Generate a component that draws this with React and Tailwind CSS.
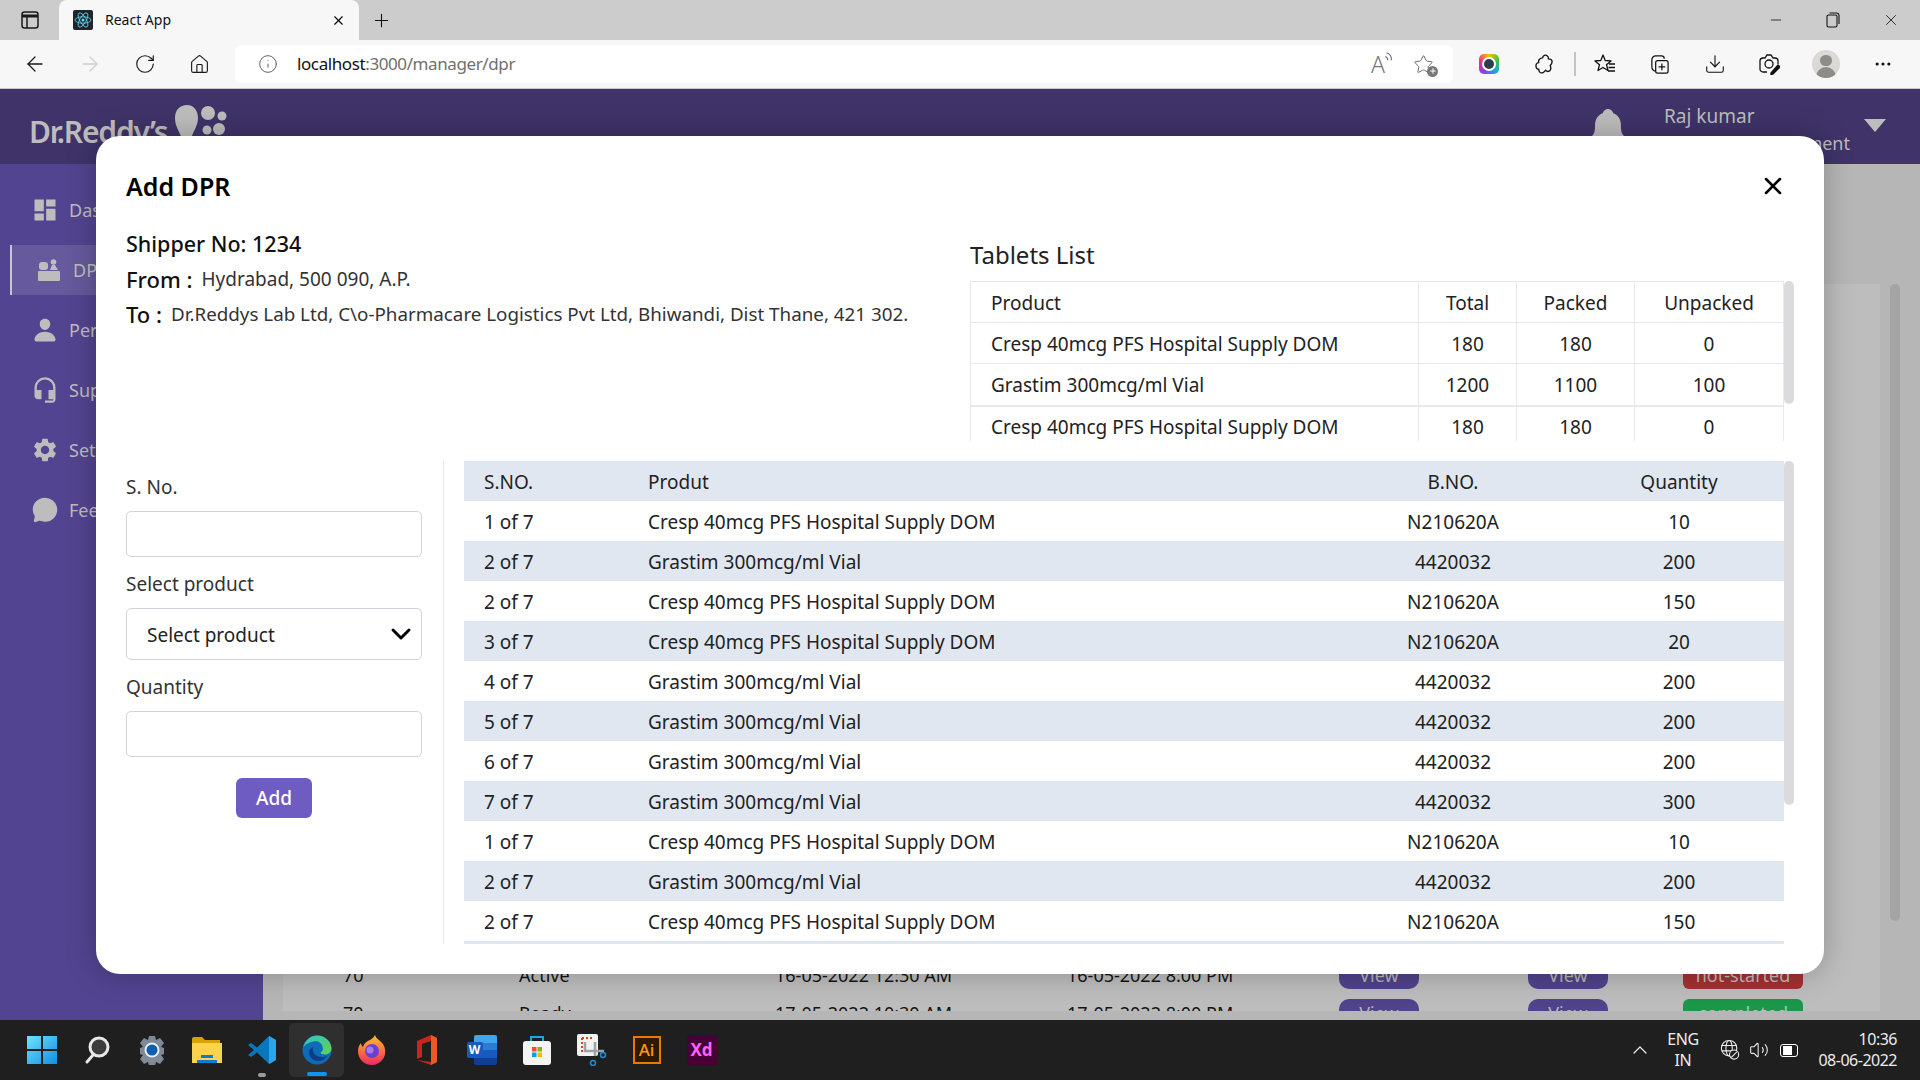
import {
  ArrowLeft, ArrowRight, RotateCw, Home, Info, Plus, X, Minus, Download, MoreHorizontal, ChevronUp, Volume2, Star, ChevronDown,
} from 'lucide-react';
import { MdDashboard, MdHeadsetMic, MdSettings } from 'react-icons/md';
import { IoPerson, IoChatbubble, IoNotifications } from 'react-icons/io5';

const font = 'font-["Noto_Sans",sans-serif]';

const tablets = [
  ['Cresp 40mcg PFS Hospital Supply DOM', 180, 180, 0],
  ['Grastim 300mcg/ml Vial', 1200, 1100, 100],
  ['Cresp 40mcg PFS Hospital Supply DOM', 180, 180, 0],
];

const cresp = 'Cresp 40mcg PFS Hospital Supply DOM';
const grastim = 'Grastim 300mcg/ml Vial';
const entries = [
  ['1 of 7', cresp, 'N210620A', 10],
  ['2 of 7', grastim, '4420032', 200],
  ['2 of 7', cresp, 'N210620A', 150],
  ['3 of 7', cresp, 'N210620A', 20],
  ['4 of 7', grastim, '4420032', 200],
  ['5 of 7', grastim, '4420032', 200],
  ['6 of 7', grastim, '4420032', 200],
  ['7 of 7', grastim, '4420032', 300],
  ['1 of 7', cresp, 'N210620A', 10],
  ['2 of 7', grastim, '4420032', 200],
  ['2 of 7', cresp, 'N210620A', 150],
  ['3 of 7', cresp, 'N210620A', 20],
];

function ReactLogo() {
  return (
    <svg viewBox="0 0 20 20" className="w-5 h-5 rounded-[2px] bg-[#20232a]" fill="none" stroke="#61dafb" strokeWidth="0.8">
      <circle cx="10" cy="10" r="1.5" fill="#61dafb" stroke="none" />
      <ellipse cx="10" cy="10" rx="8" ry="3.2" />
      <ellipse cx="10" cy="10" rx="8" ry="3.2" transform="rotate(60 10 10)" />
      <ellipse cx="10" cy="10" rx="8" ry="3.2" transform="rotate(120 10 10)" />
    </svg>
  );
}

function TabBar() {
  return (
    <div className="h-10 flex-none flex items-stretch bg-[#cccccc]">
      <div className="w-[59px] flex-none flex items-center pl-[21px]">
        <svg viewBox="0 0 18 18" className="w-[18px] h-[18px]" fill="none" stroke="#1a1a1a" strokeWidth="1.5">
          <rect x="1" y="1" width="16" height="16" rx="2.5" />
          <path d="M1 5h16" strokeWidth="3" />
          <path d="M6 5v12" />
        </svg>
      </div>
      <div className="w-[300px] flex-none flex items-center pl-[14px] pr-[13px] bg-[#f7f7f7] rounded-t-[8px]">
        <ReactLogo />
        <span className="ml-3 flex-1 text-[14px] text-[#111] -mt-[2px]">React App</span>
        <X className="w-[15px] h-[15px] text-black" strokeWidth={1.75} />
      </div>
      <div className="w-11 flex-none flex items-center justify-center">
        <Plus className="w-[21px] h-[21px] text-[#111]" strokeWidth={1.25} />
      </div>
      <div className="flex-1" />
      <div className="flex items-center text-[#111]">
        <Minus className="w-[16px] h-4 mr-[42px]" strokeWidth={1.2} />
        <svg viewBox="0 0 14 16" className="w-[14px] h-4 mr-[42px]" fill="none" stroke="currentColor" strokeWidth="1.1">
          <rect x="1" y="3" width="10" height="12" rx="1.5" />
          <path d="M3.5 1h7A2.5 2.5 0 0 1 13 3.5V12" />
        </svg>
        <X className="w-[18px] h-[18px] mr-[20px]" strokeWidth={1.1} />
      </div>
    </div>
  );
}

function NavSlot({ children }) {
  return <div className="w-[55px] flex-none flex items-center justify-center">{children}</div>;
}

function Toolbar() {
  return (
    <div className="h-[49px] flex-none flex items-center bg-[#f7f7f7] border-b border-[#c9c9c9]">
      <div className="w-[235px] flex-none flex pl-[7px]">
        <NavSlot><ArrowLeft className="w-[24px] h-[24px] text-[#1a1a1a]" strokeWidth={1.3} /></NavSlot>
        <NavSlot><ArrowRight className="w-[24px] h-[24px] text-[#cfcfcf]" strokeWidth={1.3} /></NavSlot>
        <NavSlot><RotateCw className="w-[22px] h-[22px] text-[#1a1a1a]" strokeWidth={1.3} /></NavSlot>
        <NavSlot><Home className="w-[21px] h-[21px] text-[#1a1a1a]" strokeWidth={1.3} /></NavSlot>
      </div>
      <div className="w-[1218px] h-[38px] flex-none flex items-center bg-white rounded-[6px] pl-[23px] pr-[19px]">
        <Info className="w-5 h-5 text-[#555]" strokeWidth={1.1} />
        <span className="ml-[19px] flex-1 text-[17px] tracking-[-0.4px] text-[#6f6f6f]">
          <span className="text-[#111]">localhost</span>:3000/manager/dpr
        </span>
        <span className="relative text-[23px] leading-[28px] text-[#777] font-light mr-[30px]">
          A
          <svg viewBox="0 0 8 10" className="absolute -right-[9px] top-0 w-[10px] h-[13px]" fill="none" stroke="#777" strokeWidth="0.9">
            <path d="M1 5a3 3 0 0 1 2 3M2 2a6 6 0 0 1 4 6" />
          </svg>
        </span>
        <span className="relative -ml-[2px]">
          <Star className="w-[21px] h-[21px] text-[#666]" strokeWidth={1.1} />
          <span className="absolute -right-1 -bottom-[2px] w-[11px] h-[11px] rounded-full bg-[#777] text-white flex items-center justify-center">
            <Plus className="w-[8px] h-[8px]" strokeWidth={3} />
          </span>
        </span>
      </div>
      <div className="flex-1 flex items-center text-[#111]">
        <div className="ml-[26px] w-5 h-5 rounded-[5px] bg-[conic-gradient(#f5c400,#35c24a,#19a3ee,#8b3fe0,#ee2f87,#f5c400)] flex items-center justify-center">
          <span className="w-[14px] h-[14px] rounded-full bg-white flex items-center justify-center">
            <span className="w-[10px] h-[10px] rounded-full bg-[#2e3c4f]" />
          </span>
        </div>
        <svg viewBox="0 0 20 22" className="ml-[36px] w-[19px] h-[21px]" fill="none" stroke="currentColor" strokeWidth="1.4" strokeLinejoin="round">
          <path d="M8 4a3 3 0 0 1 5-2 3 3 0 0 1 1 3c2 0 4 1 4 3s-1 3-2 4c1 2 1 5-1 6s-3 0-4-1c-1 2-4 4-6 2-1-1-1-2-1-3-2 0-3-2-3-4s2-3 3-3C3 7 5 4 8 4z" />
        </svg>
        <span className="ml-[20px] w-[2px] h-6 bg-[#c4c4c4]" />
        <svg viewBox="0 0 22 22" className="ml-[18px] w-[22px] h-[22px]" fill="none" stroke="currentColor" strokeWidth="1.3" strokeLinejoin="round">
          <path d="M9 2l2.200 5.500 5.800.4-4.500 3.800 1.500 5.800L9 14.500l-5 3 1.500-5.800L1 7.900l5.800-.4z" />
          <path d="M15 11h6M14.500 14.500H21M14 18h7" />
        </svg>
        <svg viewBox="0 0 22 22" className="ml-[33px] w-[21px] h-[21px]" fill="none" stroke="currentColor" strokeWidth="1.3">
          <rect x="7" y="7" width="13" height="13" rx="2" />
          <path d="M13.5 10v7M10 13.5h7M7 18a5 5 0 0 1-4-5V6a4 4 0 0 1 4-4h6a3 3 0 0 1 3 3" />
        </svg>
        <Download className="ml-[34px] w-[22px] h-[22px]" strokeWidth={1.2} />
        <svg viewBox="0 0 22 22" className="ml-[32px] w-[22px] h-[22px]" fill="none" stroke="currentColor" strokeWidth="1.3">
          <path d="M9 19H5a3 3 0 0 1-3-3V8a3 3 0 0 1 3-3h2l2-3h4l2 3h2a3 3 0 0 1 3 3v3" />
          <circle cx="11" cy="11" r="4" />
          <path d="M13 20l7-8 2 2-7 7-2 1z" fill="currentColor" />
        </svg>
        <span className="ml-[32px] w-7 h-7 rounded-full bg-[#dad9d6] overflow-hidden flex flex-col items-center">
          <span className="mt-[5px] w-[12px] h-[12px] rounded-full bg-[#8e8c88]" />
          <span className="mt-[1px] w-[20px] h-[12px] rounded-t-full bg-[#8e8c88]" />
        </span>
        <MoreHorizontal className="ml-[33px] w-[20px] h-[20px]" strokeWidth={1.8} />
      </div>
    </div>
  );
}

function DprIcon() {
  return (
    <svg viewBox="0 0 22 22" className="w-[22px] h-[22px]" fill="#bdbdbd">
      <rect x="0" y="12" width="22" height="10" rx="1" />
      <rect x="1" y="3" width="9" height="8" rx="3" />
      <circle cx="15.5" cy="3" r="2.8" />
      <path d="M12 11l2-5h3l3 5z" />
    </svg>
  );
}

function SideItem({ icon, label, active }) {
  return (
    <div className={`flex items-center h-[50px] text-[18px] text-[#bdbdbd] ${active ? 'bg-[#66599c] border-l-2 border-[#c7c3d8] ml-[10px] pl-[23px]' : 'pl-[31px]'}`}>
      <span className="w-[28px] flex-none flex items-center justify-center">{icon}</span>
      <span className="ml-[10px]">{label}</span>
    </div>
  );
}

function Sidebar() {
  return (
    <div className="w-[263px] flex-none bg-[#524490] pt-[21px] flex flex-col gap-[10px]">
      <SideItem label="Dashboard" icon={<MdDashboard className="w-[28px] h-[28px]" />} />
      <SideItem active label="DPR" icon={<DprIcon />} />
      <SideItem label="Personal" icon={<IoPerson className="w-[26px] h-[26px]" />} />
      <SideItem label="Support" icon={<MdHeadsetMic className="w-[32px] h-[32px]" />} />
      <SideItem label="Settings" icon={<MdSettings className="w-[36px] h-[36px]" />} />
      <SideItem label="Feedback" icon={<IoChatbubble className="w-[32px] h-[32px]" />} />
    </div>
  );
}

function BgRow({ sno, status, started, ended, badge, badgeClass }) {
  return (
    <div className="h-[28px] flex-none flex items-center text-[18px] text-[#141414] mb-[10px]">
      <span className="w-[236px] pl-[60px]">{sno}</span>
      <span className="w-[256px]">{status}</span>
      <span className="w-[292px]">{started}</span>
      <span className="w-[272px]">{ended}</span>
      <span className="w-[80px] h-full rounded-[10px] bg-[#50428b] text-[#b5b5b5] flex items-center justify-center">View</span>
      <span className="ml-[109px] w-[80px] h-full rounded-[10px] bg-[#50428b] text-[#b5b5b5] flex items-center justify-center">View</span>
      <span className={`ml-[75px] w-[120px] h-full rounded-[6px] text-[#bcbcbc] flex items-center justify-center ${badgeClass}`}>{badge}</span>
    </div>
  );
}

function Background() {
  return (
    <div className="absolute inset-0 flex flex-col">
      <div className="h-[75px] flex-none bg-[#3f3369] flex items-center text-[#bdbdbd]">
        <span className="ml-[29px] text-[30px] font-semibold tracking-[-1.2px] mt-[10px]">Dr.Reddy’s</span>
        <svg viewBox="0 0 54 44" className="ml-[8px] w-[54px] h-[44px]" fill="#bdbdbd">
          <path d="M12 0c7 0 11 6 11 13 0 9-6 14-7 22-1 5-6 5-8 1C5 27 0 22 0 13 0 5 5 0 12 0z" />
          <circle cx="33" cy="8" r="7" />
          <circle cx="47" cy="11" r="4.5" />
          <circle cx="32" cy="25" r="4.5" />
          <circle cx="44" cy="24" r="6" />
          <circle cx="38" cy="37" r="6" />
        </svg>
        <div className="flex-1" />
        <IoNotifications className="w-[46px] h-[46px] mr-[33px] mt-[4px]" />
        <div className="w-[186px] text-[19px] leading-[27px] mt-[6px]">
          <div>Raj kumar</div>
          <div className="text-right text-[18px]">Head of development</div>
        </div>
        <span className="ml-[14px] mr-[34px] w-0 h-0 border-x-[11px] border-x-transparent border-t-[13px] border-t-[#bdbdbd] -mt-[2px]" />
      </div>
      <div className="flex-1 flex min-h-0">
        <Sidebar />
        <div className="flex-1 min-w-0 bg-[#b6b6b6] flex flex-col pt-[120px] pb-[9px] pl-[20px] pr-[10px]">
          <div className="flex-1 min-h-0 flex">
            {/* rows above these two sit behind the modal, so only the last ones are drawn */}
            <div className="w-[1597px] flex-none bg-[#bdbdbd] overflow-hidden pt-[677px]">
              <BgRow sno="70" status="Active" started="16-05-2022 12:30 AM" ended="16-05-2022 8:00 PM" badge="not-started" badgeClass="bg-[#a33131]" />
              <BgRow sno="70" status="Ready" started="17-05-2022 10:30 AM" ended="17-05-2022 8:00 PM" badge="completed" badgeClass="bg-[#1a9748]" />
            </div>
            <div className="w-[10px] ml-[10px] h-[637px] flex-none rounded-full bg-[#a4a4a4]" />
          </div>
        </div>
      </div>
    </div>
  );
}

function Scrollbar({ h }) {
  return (
    <div className="w-[10px] flex-none">
      <div className={`w-full rounded-full bg-[#dbdbde] ${h}`} />
    </div>
  );
}

function TabletsTable() {
  return (
    <div className="flex h-[160px] overflow-hidden">
      <table className="w-[813px] flex-none table-fixed border-collapse self-start text-[19px] text-[#222] [&_td]:pt-[2px] [&_th]:pt-[2px]">
        <colgroup>
          <col className="w-[448px]" />
          <col className="w-[98px]" />
          <col className="w-[118px]" />
          <col className="w-[149px]" />
        </colgroup>
        <thead>
          <tr className="h-[41px]">
            <th className="border border-[#e8e8ec] font-normal text-left pl-5">Product</th>
            <th className="border border-[#e8e8ec] font-normal">Total</th>
            <th className="border border-[#e8e8ec] font-normal">Packed</th>
            <th className="border border-[#e8e8ec] font-normal">Unpacked</th>
          </tr>
        </thead>
        <tbody>
          {tablets.map((t, i) => (
            <tr key={i} className={i === 1 ? 'h-[42px] border-b-2 border-[#e8e8ec]' : 'h-[41px]'}>
              <td className="border-x border-t border-[#e8e8ec] text-left pl-5">{t[0]}</td>
              <td className="border-x border-t border-[#e8e8ec] text-center">{t[1]}</td>
              <td className="border-x border-t border-[#e8e8ec] text-center">{t[2]}</td>
              <td className="border-x border-t border-[#e8e8ec] text-center">{t[3]}</td>
            </tr>
          ))}
        </tbody>
      </table>
      <Scrollbar h="h-[123px]" />
    </div>
  );
}

function EntriesTable() {
  return (
    <div className="flex h-[483px] overflow-hidden">
      <table className="w-[1320px] flex-none table-fixed border-collapse self-start text-[19px] text-[#222] [&_td]:pt-[2px] [&_th]:pt-[2px]">
        <colgroup>
          <col className="w-[164px]" />
          <col className="w-[704px]" />
          <col className="w-[242px]" />
          <col className="w-[210px]" />
        </colgroup>
        <thead>
          <tr className="h-10 bg-[#e1e7f0]">
            <th className="font-normal text-left pl-5">S.NO.</th>
            <th className="font-normal text-left pl-5">Produt</th>
            <th className="font-normal">B.NO.</th>
            <th className="font-normal">Quantity</th>
          </tr>
        </thead>
        <tbody>
          {entries.map((e, i) => (
            <tr key={i} className={`h-10 ${i % 2 ? 'bg-[#e1e7f0]' : 'bg-white'}`}>
              <td className="pl-5">{e[0]}</td>
              <td className="pl-5">{e[1]}</td>
              <td className="text-center">{e[2]}</td>
              <td className="text-center">{e[3]}</td>
            </tr>
          ))}
        </tbody>
      </table>
      <Scrollbar h="h-[344px]" />
    </div>
  );
}

function Field({ label, mt, children }) {
  return (
    <div className={mt}>
      <label className="block text-[19px] leading-[28px] text-[#333] mb-[10px]">{label}</label>
      {children}
    </div>
  );
}

function Modal() {
  return (
    <div className="absolute left-[96px] top-[47px] w-[1728px] h-[838px] rounded-[24px] bg-white px-[30px] pt-[30px] flex flex-col shadow-[0_0_30px_rgba(0,0,0,0.25)]">
      <div className="h-10 flex-none flex items-center justify-between pr-[7px]">
        <h2 className="text-[25px] font-semibold text-black pt-[2px]">Add DPR</h2>
        <X className="w-[28px] h-[28px] text-black" strokeWidth={2.2} />
      </div>

      <div className="h-[255px] flex-none flex">
        <div className="w-[844px] flex-none pt-[23px] text-[#333]">
          <div className="text-[21.5px] font-medium leading-[30px] text-[#111]">Shipper No: 1234</div>
          <div className="mt-[5px] h-[30px] flex items-center text-[19px]">
            <span className="text-[22px] font-medium text-[#111] mr-[9px]">From :</span>Hydrabad, 500 090, A.P.
          </div>
          <div className="mt-[5px] h-[30px] flex items-center text-[18.8px]">
            <span className="text-[22px] font-medium text-[#111] mr-[9px]">To :</span>Dr.Reddys Lab Ltd, C\o-Pharmacare Logistics Pvt Ltd, Bhiwandi, Dist Thane, 421 302.
          </div>
        </div>
        <div className="flex-1 min-w-0 pt-[33px]">
          <h3 className="text-[24px] leading-[32px] text-[#222] mb-[10px]">Tablets List</h3>
          <TabletsTable />
        </div>
      </div>

      <div className="flex-1 min-h-0 flex items-start">
        <div className="w-[296px] flex-none pt-[12px]">
          <Field label="S. No.">
            <input className="block w-full h-[46px] bg-white border border-[#d3d3db] rounded-[5px]" />
          </Field>
          <Field label="Select product" mt="mt-[13px]">
            <div className="relative">
              <select className="block w-full h-[52px] pl-[20px] pt-[2px] appearance-none bg-white border border-[#d3d3db] rounded-[5px] text-[19px] text-[#222]">
                <option>Select product</option>
              </select>
              <ChevronDown className="absolute right-[5px] top-[10px] w-[32px] h-[32px] text-black pointer-events-none" strokeWidth={2.2} />
            </div>
          </Field>
          <Field label="Quantity" mt="mt-[13px]">
            <input className="block w-full h-[46px] bg-white border border-[#d3d3db] rounded-[5px]" />
          </Field>
          <button className="block mx-auto mt-[21px] w-[76px] h-10 rounded-[6px] bg-[#6f5cc2] text-white text-[19px] font-medium">Add</button>
        </div>
        <div className="ml-[21px] mr-[20px] w-px h-[483px] flex-none bg-[#e8e8ec]" />
        <EntriesTable />
      </div>
    </div>
  );
}

function WinLogo() {
  return (
    <svg viewBox="0 0 30 30" className="w-[30px] h-[30px]">
      <defs>
        <linearGradient id="win" x1="0" y1="0" x2="1" y2="1">
          <stop offset="0" stopColor="#6fe3ff" />
          <stop offset="1" stopColor="#0f8fe0" />
        </linearGradient>
      </defs>
      <path fill="url(#win)" d="M0 1h14v13H0zM16 1h14v13H16zM0 16h14v13H0zM16 16h14v13H16z" />
    </svg>
  );
}

const taskIcons = [
  <WinLogo />,
  <svg viewBox="0 0 30 30" className="w-[30px] h-[30px]" fill="none" stroke="#e8e8e8" strokeWidth="3" strokeLinecap="round">
    <circle cx="17" cy="12" r="9" fill="#3c3c3c" />
    <path d="M11 20l-6 7" />
  </svg>,
  <svg viewBox="0 0 30 30" className="w-[30px] h-[30px]">
    <path fill="#7f8a94" d="M12 1h6l1 4 4-2 4 5-3 4 3 1v6l-3 1 3 4-4 5-4-2-1 4h-6l-1-4-4 2-4-5 3-4-3-1v-6l3-1-3-4 4-5 4 2z" />
    <circle cx="15" cy="15" r="7.5" fill="#e6eef5" />
    <circle cx="15" cy="15" r="5.5" fill="#0f5fae" />
  </svg>,
  <svg viewBox="0 0 30 30" className="w-[30px] h-[30px]">
    <path fill="#d9a000" d="M0 4a2 2 0 0 1 2-2h8l3 3h15v6H0z" />
    <path fill="#fcd34d" d="M0 8h30v20H0z" />
    <path fill="#0f7ccf" d="M9 20h12v3H9z" />
    <path fill="#0f7ccf" d="M5 25h20v3H5z" />
  </svg>,
  <svg viewBox="0 0 30 30" className="w-[30px] h-[30px]">
    <path fill="#0a77bd" d="M22 1l7 4v20l-7 4-12-11.5L4 22 1 20l6-5-6-5 3-2 6 4.5z" />
    <path fill="#2aa5ea" d="M22 1l7 4v20l-7 4z" />
  </svg>,
  <svg viewBox="0 0 30 30" className="w-[30px] h-[30px]">
    <defs>
      <linearGradient id="edge1" x1="0" y1="0" x2="1" y2="1">
        <stop offset="0" stopColor="#2fc3c7" />
        <stop offset="1" stopColor="#62d24f" />
      </linearGradient>
    </defs>
    <circle cx="15" cy="15" r="14.5" fill="#0d6bb8" />
    <path fill="url(#edge1)" d="M1 13C3 5 9 .5 15 .5c8 0 14.5 6 14.5 13 0 4-3.500 6-7 6-2 0-4-1-4-2 2-1 3-3 2-6-1-4-5-6-9-5-5 1-9 3-10.500 6.500z" />
    <path fill="#0a3f86" d="M7 17c0 6 5 9 9 9 4 0 7-2 9-5-3 1.500-7 1.500-10 0-3-1.500-5-5-4-9-2 1-4 3-4 5z" />
  </svg>,
  <svg viewBox="0 0 30 30" className="w-[30px] h-[30px]">
    <defs>
      <linearGradient id="ff" x1="0" y1="0" x2="0" y2="1">
        <stop offset="0" stopColor="#ffc126" />
        <stop offset="1" stopColor="#ef2a5e" />
      </linearGradient>
    </defs>
    <path fill="url(#ff)" d="M18 0c1 4 5 5 8 9 3 5 3 10 0 15-3 4-7 6-11 6-8 0-14-6-14-14 0-3 1-6 3-8 0 2 1 3 2 4 1-4 4-6 7-7 2-1 4-3 5-5z" />
    <circle cx="15" cy="16" r="7" fill="#6c3fd1" />
    <circle cx="13" cy="15" r="3.500" fill="#a77be8" />
  </svg>,
  <svg viewBox="0 0 30 30" className="w-[30px] h-[30px]">
    <path fill="#c8261a" d="M5 6l14-6 6 3v24l-6 3-14-5 14 2V6l-9 3v13l-5 2z" />
    <path fill="#eb5a24" d="M19 0l6 3v24l-6 3z" />
  </svg>,
  <div className="relative w-[30px] h-[30px]">
    <div className="absolute left-[7px] top-0 w-[23px] h-[30px] flex flex-col rounded-[2px] overflow-hidden">
      <div className="flex-1 bg-[#41a5ee]" />
      <div className="flex-1 bg-[#2b7cd3]" />
      <div className="flex-1 bg-[#185abd]" />
      <div className="flex-1 bg-[#103f91]" />
    </div>
    <div className="absolute left-0 top-[7px] w-[16px] h-[16px] rounded-[2px] bg-[#185abd] text-white text-[12px] font-bold leading-[16px] text-center">W</div>
  </div>,
  <svg viewBox="0 0 30 30" className="w-[30px] h-[30px]">
    <path fill="none" stroke="#1aa5e4" strokeWidth="2" d="M9 8V2h12v6" />
    <rect x="1" y="6" width="28" height="24" rx="3" fill="#f4f4f4" />
    <path fill="#f25022" d="M10 12h4.500v4.500H10z" />
    <path fill="#7fba00" d="M15.500 12H20v4.500h-4.500z" />
    <path fill="#00a4ef" d="M10 17.500h4.500V22H10z" />
    <path fill="#ffb900" d="M15.500 17.500H20V22h-4.500z" />
  </svg>,
  <svg viewBox="0 0 30 32" className="w-[30px] h-[32px]">
    <rect x="0" y="0" width="21" height="22" rx="2" fill="#f2f2f2" />
    <path fill="none" stroke="#d8401f" strokeWidth="2" strokeDasharray="2 2" d="M5 4h10M5 4v14" />
    <path fill="none" stroke="#9aa3ab" strokeWidth="2.500" d="M8 8v9h19M18 8v14" />
    <circle cx="26" cy="21" r="2.500" fill="none" stroke="#1a8fd6" strokeWidth="1.500" />
    <circle cx="16" cy="29" r="2.500" fill="none" stroke="#1a8fd6" strokeWidth="1.500" />
  </svg>,
  <div className="w-[28px] h-[28px] bg-[#2e1a02] border-2 border-[#e87a00] text-[#ff9a00] text-[17px] font-medium leading-[24px] text-center">Ai</div>,
  <div className="w-[30px] h-[30px] rounded-[3px] bg-[#470137] text-[#ff61f6] text-[17px] font-bold leading-[30px] text-center">Xd</div>,
];

function Taskbar() {
  return (
    <div className="h-[60px] flex-none bg-[#1f1f1f] flex items-center pl-[14px] text-[#ececec]">
      {taskIcons.map((icon, i) => (
        <div key={i} className={`relative w-[55px] h-[54px] flex-none flex items-center justify-center rounded-[5px] ${i === 5 ? 'bg-[#2f2f2f]' : ''}`}>
          {icon}
          {i === 4 && <span className="absolute bottom-0 w-[8px] h-[4px] rounded-full bg-[#9b9b9b]" />}
          {i === 5 && <span className="absolute bottom-[1px] w-[20px] h-[4px] rounded-full bg-[#0a95f5]" />}
        </div>
      ))}
      <div className="flex-1" />
      <ChevronUp className="w-[24px] h-[24px] mr-[8px]" strokeWidth={1.2} />
      <div className="w-[46px] text-center text-[16px] leading-[21px] tracking-[-0.4px]">
        <div>ENG</div>
        <div>IN</div>
      </div>
      <svg viewBox="0 0 22 24" className="ml-[14px] w-[20px] h-[22px]" fill="none" stroke="currentColor" strokeWidth="1.2">
        <circle cx="10" cy="10" r="8.5" />
        <ellipse cx="10" cy="10" rx="3.500" ry="8.500" />
        <path d="M2 7h16M2 13h16" />
        <circle cx="15.500" cy="17" r="5" fill="#1f1f1f" />
        <path d="M12.500 20l6-6" />
      </svg>
      <Volume2 className="ml-[9px] w-[20px] h-[20px]" strokeWidth={1.3} />
      <span className="ml-[11px] w-[18px] h-[13px] rounded-[3px] border border-white flex items-center pl-[2px]">
        <span className="w-[9px] h-[9px] bg-white" />
      </span>
      <div className="ml-[19px] mr-[23px] w-[80px] text-right text-[16px] leading-[21px] tracking-[-0.5px] whitespace-nowrap">
        <div>10:36</div>
        <div>08-06-2022</div>
      </div>
    </div>
  );
}

export default function App() {
  return (
    <div className={`w-[1920px] h-[1080px] overflow-hidden flex flex-col ${font}`}>
      <TabBar />
      <Toolbar />
      <div className="relative flex-1 min-h-0 overflow-hidden">
        <Background />
        <Modal />
      </div>
      <Taskbar />
    </div>
  );
}
